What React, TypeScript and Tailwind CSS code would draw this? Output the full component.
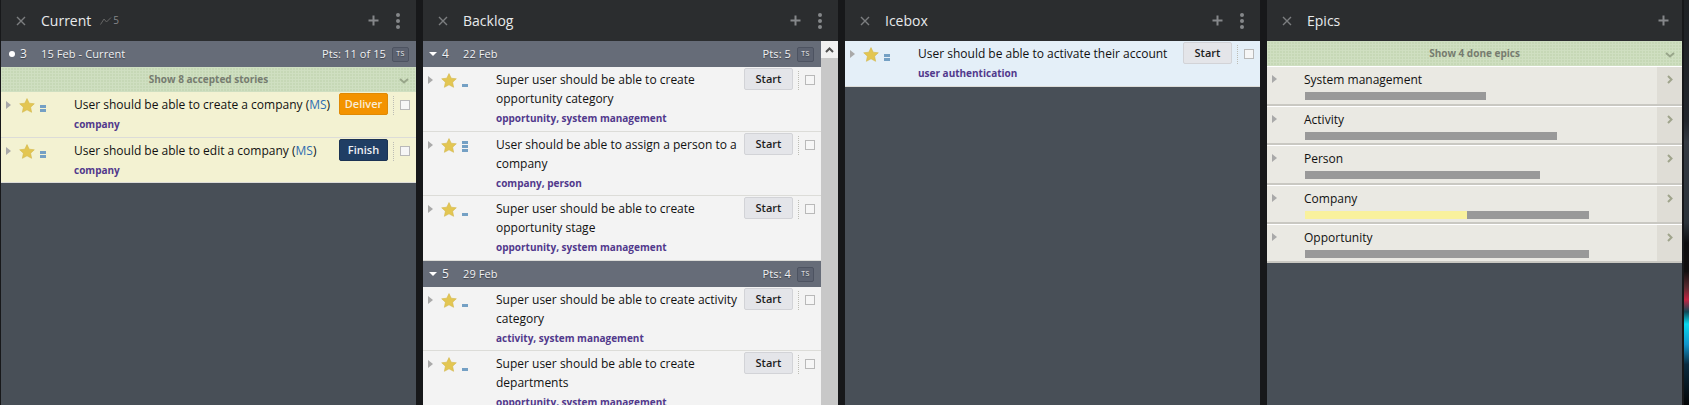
import React from "react";

const font = "font-['Open_Sans',sans-serif]";

function Cross() {
  return (
    <svg width="10" height="10" viewBox="0 0 10 10" className="shrink-0">
      <path d="M1 1 L9 9 M9 1 L1 9" stroke="#7c7e80" strokeWidth="1.4" />
    </svg>
  );
}

function Plus() {
  return (
    <svg width="11" height="11" viewBox="0 0 11 11" className="shrink-0">
      <path d="M5.5 0.5 V10.5 M0.5 5.5 H10.5" stroke="#85878a" strokeWidth="2" />
    </svg>
  );
}

function Dots() {
  return (
    <div className="flex w-[4px] flex-col gap-[2px]">
      <div className="h-[4px] w-[4px] rounded-full bg-[#85878a]" />
      <div className="h-[4px] w-[4px] rounded-full bg-[#85878a]" />
      <div className="h-[4px] w-[4px] rounded-full bg-[#85878a]" />
    </div>
  );
}

function Header({ title, velocity, menu = true }: { title: string; velocity?: string; menu?: boolean }) {
  return (
    <div className="flex h-[41px] shrink-0 items-center bg-[#2b2d2f] pl-[15px] pr-[16px]">
      <Cross />
      <span className="ml-[15px] text-[14px] leading-[20px] text-[#e8eaec]">{title}</span>
      {velocity && (
        <span className="ml-[9px] flex items-center gap-[1px] text-[10px] text-[#85878a]">
          <svg width="12" height="8" viewBox="0 0 12 8">
            <path d="M0.5 7.5 L4 2 L6.5 5 L11 0.5" stroke="#666" strokeWidth="1" fill="none" />
          </svg>
          {velocity}
        </span>
      )}
      <div className={menu ? "ml-auto flex items-center gap-[17px]" : "ml-auto mr-[-3px] flex items-center"}>
        <Plus />
        {menu && <Dots />}
      </div>
    </div>
  );
}

function Iteration({ num, date, pts, current }: { num: string; date: string; pts: string; current?: boolean }) {
  return (
    <div className="flex h-[26px] shrink-0 items-center bg-[#666c78] pr-[7px] text-[11px] tracking-[0.1px] text-[#f0f1f3] [text-shadow:0_1px_1px_#3a3f48]">
      <div className="flex w-[18px] justify-end pr-[3px]">
        {current ? (
          <div className="mr-[1px] h-[6px] w-[6px] rounded-full bg-white" />
        ) : (
          <div className="mr-[1px] h-0 w-0 border-x-[4px] border-t-[4px] border-x-transparent border-t-white" />
        )}
      </div>
      <span className="w-[22px] pl-[1px] text-[12px]">{num}</span>
      <span>{date}</span>
      <span className="ml-auto">{pts}</span>
      <span className="ml-[6px] flex h-[15px] w-[17px] items-center justify-center rounded-[2px] border border-[#4d5361] bg-[#5c6270] text-[7px] tracking-[0.5px]">
        TS
      </span>
    </div>
  );
}

function Done({ label }: { label: string }) {
  return (
    <div className="relative flex h-[25px] shrink-0 items-center justify-center bg-[#c6d8b6] bg-[linear-gradient(#cfdfc1_1px,transparent_1px),linear-gradient(90deg,#cfdfc1_1px,transparent_1px)] bg-[length:3px_3px] text-[10px] font-bold text-[#767c70]">
      {label}
      <svg width="10" height="6" viewBox="0 0 10 6" className="absolute right-[7px] top-[11px]">
        <path d="M1 1 L5 4.5 L9 1" stroke="#98a68a" strokeWidth="2" fill="none" />
      </svg>
    </div>
  );
}

function Tri() {
  return (
    <div className="h-0 w-0 border-y-[4px] border-l-[5px] border-y-transparent border-l-[#a9a9a9]" />
  );
}

function Star() {
  return (
    <svg width="16" height="15" viewBox="0 0 16 15">
      <path
        d="M8 0.6 L10.2 5.2 L15.3 5.8 L11.6 9.2 L12.6 14.3 L8 11.8 L3.4 14.3 L4.4 9.2 L0.7 5.8 L5.8 5.2 Z"
        fill="#e3c652"
        stroke="#d4b74a"
        strokeWidth="0.6"
      />
    </svg>
  );
}

function Estimate({ n }: { n: number }) {
  return (
    <div className="flex h-[20px] w-[6px] flex-col justify-end gap-[1px]">
      {Array.from({ length: n }).map((_, i) => (
        <div key={i} className="h-[3px] bg-[#74a0c4]" />
      ))}
    </div>
  );
}

function Story({
  title,
  owner,
  tags,
  action,
  est,
  bg,
  h,
}: {
  title: string;
  owner?: string;
  tags: string;
  action: "Start" | "Deliver" | "Finish";
  est: number;
  bg: string;
  h: string;
}) {
  const btn =
    action === "Deliver"
      ? "bg-[#f39300] border-[#e08a05] text-[#f9ecd6]"
      : action === "Finish"
        ? "bg-[#203e64] border-[#1b3353] text-[#eef1f5]"
        : "bg-[#e4e5e9] border-[#d2d3d7] text-[#1d1d1d]";
  return (
    <div className={`flex shrink-0 border-b border-[#dcdcd8] ${bg} ${h}`}>
      <div className="w-[18px] pl-[5px] pt-[9px]">
        <Tri />
      </div>
      <div className="w-[21px] pt-[6px]">
        <Star />
      </div>
      <div className="w-[34px]">
        <Estimate n={est} />
      </div>
      <div className="min-w-0 flex-1 pr-[6px]">
        <div className="pt-[3px] text-[12px] leading-[19px] text-[#111]">
          {title}
          {owner && (
            <>
              {" "}
              (<span className="text-[#2f6db0]">{owner}</span>)
            </>
          )}
        </div>
        <div className="mt-[1px] text-[10px] font-bold leading-[19px] text-[#51398c]">{tags}</div>
      </div>
      <div
        className={`mt-[1px] flex h-[22px] w-[49px] shrink-0 items-center justify-center rounded-[2px] border text-[11px] font-semibold ${btn}`}
      >
        {action}
      </div>
      <div className="ml-[5px] mt-[4px] h-[19px] w-0 border-l border-dotted border-[#bdbdb5]" />
      <div className="ml-[6px] mr-[6px] mt-[8px] h-[10px] w-[10px] shrink-0 border border-[#b9b9b9] bg-[#f6f6f6]" />
    </div>
  );
}

function Epic({ name, grey, yellow, h }: { name: string; grey: number; yellow?: number; h: string }) {
  return (
    <div className={`flex shrink-0 border-b-2 border-[#c9c8c2] border-t border-t-white ${h} bg-[#eae9e3]`}>
      <div className="w-[37px] pl-[5px] pt-[8px]">
        <Tri />
      </div>
      <div className="flex-1">
        <div className="pt-[4px] text-[12px] leading-[18px] text-[#111]">{name}</div>
        <div className="ml-[1px] mt-[3px] flex h-[8px]">
          {yellow ? <div style={{ width: yellow }} className="bg-[#f9f19d]" /> : null}
          <div style={{ width: grey }} className="bg-[#999999]" />
        </div>
      </div>
      <div className="flex w-[25px] justify-center bg-[#dfddd6] pt-[8px]">
        <svg width="6" height="9" viewBox="0 0 6 9">
          <path d="M1 1 L4.5 4.5 L1 8" stroke="#a0a48c" strokeWidth="2" fill="none" />
        </svg>
      </div>
    </div>
  );
}

export default function App() {
  const white = "bg-[#f3f3f3]";
  const yellow = "bg-[#f3f2d2]";
  return (
    <div className={`flex h-[405px] w-[1689px] overflow-hidden bg-[#17181a] pl-[1px] ${font}`}>
      <div className="mr-[7px] flex w-[415px] shrink-0 flex-col bg-[#484f57]">
        <Header title="Current" velocity="5" />
        <Iteration num="3" date="15 Feb - Current" pts="Pts: 11 of 15" current />
        <Done label="Show 8 accepted stories" />
        <Story
          title="User should be able to create a company"
          owner="MS"
          tags="company"
          action="Deliver"
          est={2}
          bg={yellow}
          h="h-[46px]"
        />
        <Story
          title="User should be able to edit a company"
          owner="MS"
          tags="company"
          action="Finish"
          est={2}
          bg={yellow}
          h="h-[45px]"
        />
      </div>

      <div className="mr-[7px] flex w-[415px] shrink-0 flex-col bg-[#484f57]">
        <Header title="Backlog" />
        <div className="flex min-h-0 flex-1">
          <div className="flex w-[398px] flex-col overflow-hidden">
            <Iteration num="4" date="22 Feb" pts="Pts: 5" />
            <Story title="Super user should be able to create opportunity category" tags="opportunity, system management" action="Start" est={1} bg={white} h="h-[65px]" />
            <Story title="User should be able to assign a person to a company" tags="company, person" action="Start" est={3} bg={white} h="h-[64px]" />
            <Story title="Super user should be able to create opportunity stage" tags="opportunity, system management" action="Start" est={1} bg={white} h="h-[65px]" />
            <Iteration num="5" date="29 Feb" pts="Pts: 4" />
            <Story title="Super user should be able to create activity category" tags="activity, system management" action="Start" est={1} bg={white} h="h-[64px]" />
            <Story title="Super user should be able to create departments" tags="opportunity, system management" action="Start" est={1} bg={white} h="h-[65px]" />
          </div>
          <div className="flex w-[17px] flex-col bg-[#c8c8c8]">
            <div className="flex h-[17px] items-center justify-center bg-[#f1f1f1]">
              <svg width="9" height="6" viewBox="0 0 9 6">
                <path d="M1 5 L4.5 1.5 L8 5" stroke="#505050" strokeWidth="2" fill="none" />
              </svg>
            </div>
          </div>
        </div>
      </div>

      <div className="mr-[7px] flex w-[415px] shrink-0 flex-col bg-[#484f57]">
        <Header title="Icebox" />
        <Story title="User should be able to activate their account" tags="user authentication" action="Start" est={2} bg="bg-[#e4eff8]" h="h-[46px]" />
      </div>

      <div className="flex w-[415px] shrink-0 flex-col bg-[#484f57]">
        <Header title="Epics" menu={false} />
        <Done label="Show 4 done epics" />
        <Epic name="System management" grey={181} h="h-[40px]" />
        <Epic name="Activity" grey={252} h="h-[39px]" />
        <Epic name="Person" grey={235} h="h-[40px]" />
        <Epic name="Company" yellow={162} grey={122} h="h-[39px]" />
        <Epic name="Opportunity" grey={284} h="h-[39px]" />
      </div>

      <svg width="5" height="405" viewBox="0 0 5 405" className="ml-[2px] shrink-0">
        <defs>
          <linearGradient id="wall" x1="0" y1="0" x2="0" y2="1">
            <stop offset="0" stopColor="#1f2225" />
            <stop offset="0.3" stopColor="#22262c" />
            <stop offset="0.35" stopColor="#343a42" />
            <stop offset="0.55" stopColor="#2b333a" />
            <stop offset="0.6" stopColor="#0d0e10" />
            <stop offset="0.67" stopColor="#121010" />
            <stop offset="0.71" stopColor="#5b2a30" />
            <stop offset="0.74" stopColor="#c02542" />
            <stop offset="0.77" stopColor="#0e4a58" />
            <stop offset="0.8" stopColor="#09d8ee" />
            <stop offset="0.85" stopColor="#1296cc" />
            <stop offset="0.9" stopColor="#0b2c40" />
            <stop offset="1" stopColor="#050607" />
          </linearGradient>
        </defs>
        <rect x="0" y="0" width="5" height="405" fill="url(#wall)" />
      </svg>
    </div>
  );
}
